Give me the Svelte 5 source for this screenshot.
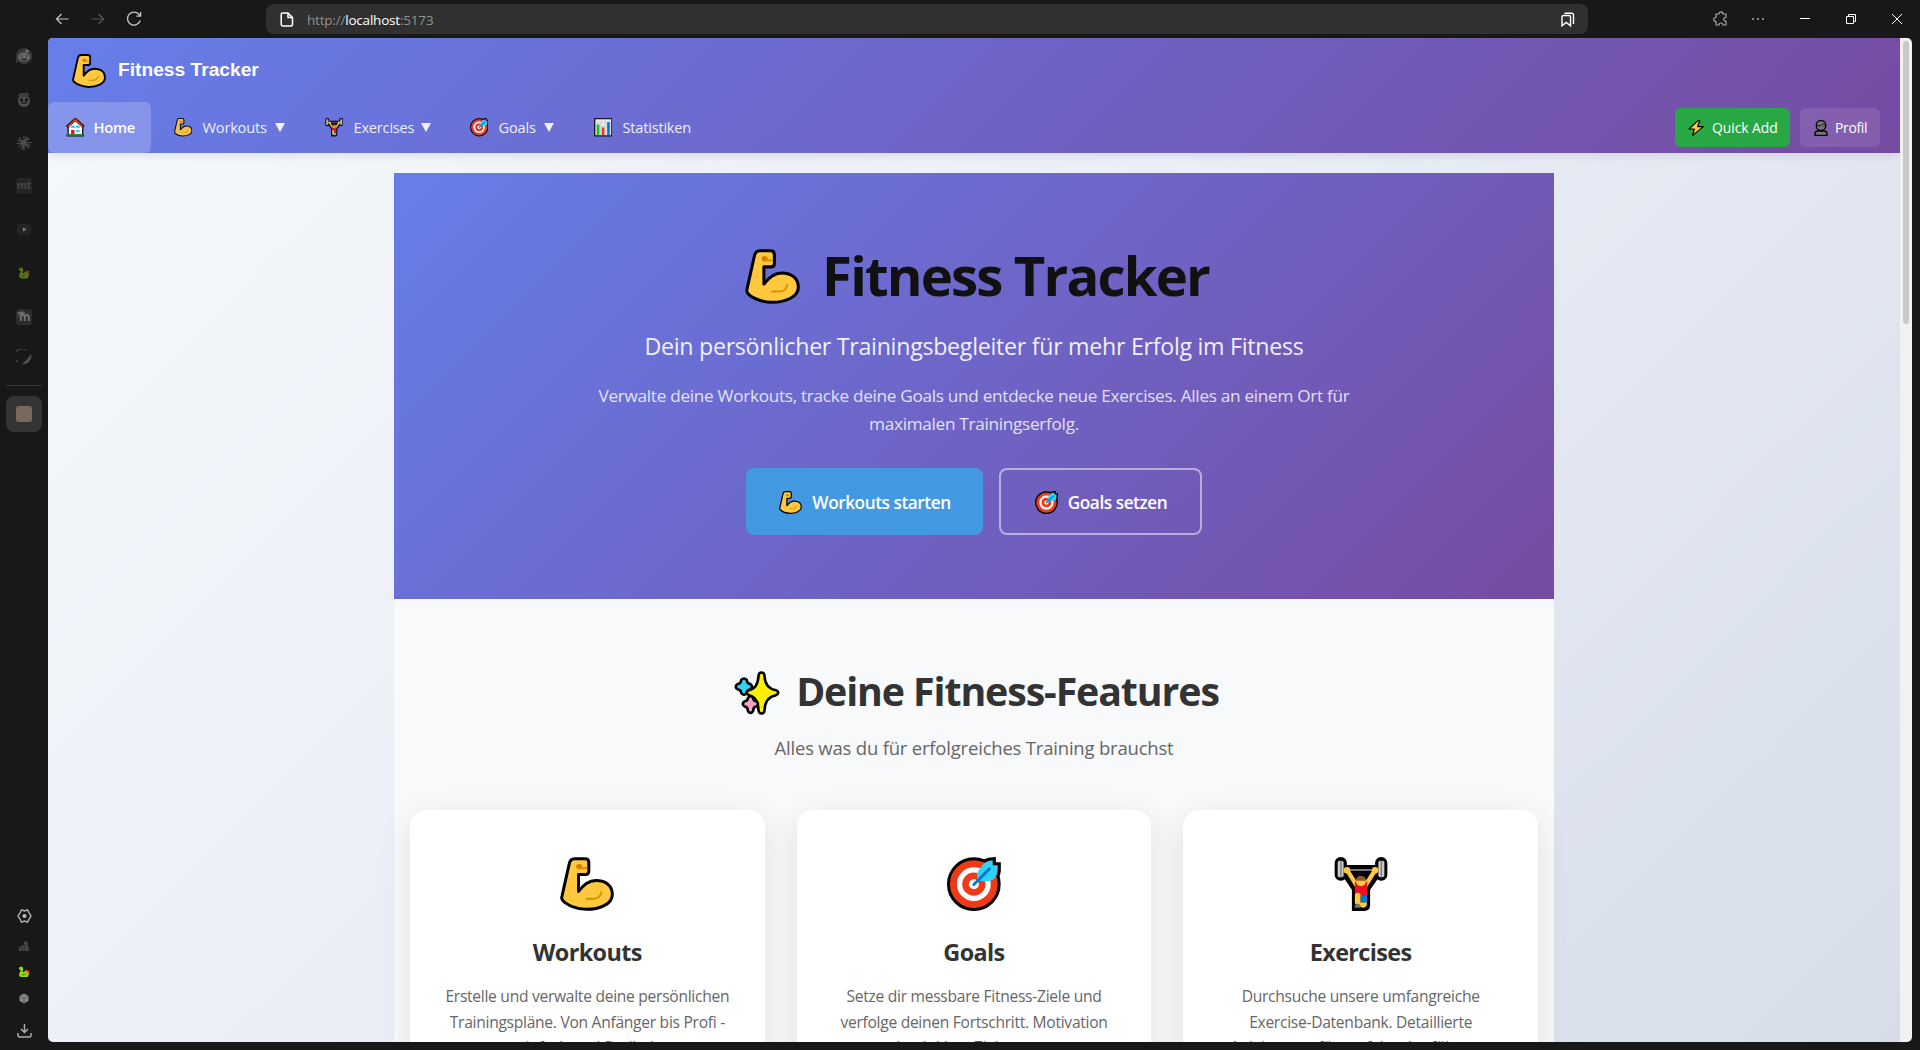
<script>
  const nav = [
    { id: 'home', label: 'Home', icon: 'house', active: true },
    { id: 'workouts', label: 'Workouts', icon: 'arm', menu: true },
    { id: 'exercises', label: 'Exercises', icon: 'lifter', menu: true },
    { id: 'goals', label: 'Goals', icon: 'target', menu: true },
    { id: 'stats', label: 'Statistiken', icon: 'chart' }
  ];
  const cards = [
    { title: 'Workouts', icon: 'arm', lines: ['Erstelle und verwalte deine persönlichen', 'Trainingspläne. Von Anfänger bis Profi -', 'einfach und flexibel.'] },
    { title: 'Goals', icon: 'target', lines: ['Setze dir messbare Fitness-Ziele und', 'verfolge deinen Fortschritt. Motivation', 'durch klare Zielsetzung.'] },
    { title: 'Exercises', icon: 'lifter', lines: ['Durchsuche unsere umfangreiche', 'Exercise-Datenbank. Detaillierte', 'Anleitungen für perfekte Ausführung.'] }
  ];
</script>

{#snippet emoji(name)}
  {#if name === 'arm'}
    <svg class="emoji" viewBox="0 0 163 163">
      <path d="M44 5H76Q87 5 87 16V43Q87 53 77 53H56V104Q80 71 108 71C140 71 158 88 158 113C158 143 118 158 80 158C50 158 20 145 8 131Q4 126 6 118L28 20Q31 5 44 5Z" fill="#ffc83d" stroke="#000" stroke-width="9" stroke-linejoin="round" />
      <ellipse cx="58" cy="29" rx="9" ry="8" fill="#d67f00" />
      <path d="M58 34H82M78 126H102Q122 126 126 104" fill="none" stroke="#d68f00" stroke-width="5.5" />
    </svg>
  {:else if name === 'target'}
    <svg class="emoji" viewBox="0 0 163 163">
      <path d="M106 25Q116 11 138 10V25H153V40Q152 58 140 68" fill="#000" stroke="#000" stroke-width="19" />
      <circle cx="81" cy="82" r="76.5" fill="#f03a17" stroke="#000" stroke-width="9" />
      <circle cx="81" cy="82" r="43" fill="none" stroke="#fff" stroke-width="16" />
      <circle cx="81" cy="82" r="15" fill="#fff" />
      <path d="M91 72V48L106 25Q116 11 138 10V25H153V40Q152 58 140 68Q132 73 118 73Z" fill="#31d2f7" />
      <path d="M81 83L128 36" stroke="#0078d7" stroke-width="9" stroke-linecap="round" />
    </svg>
  {:else if name === 'lifter'}
    <svg class="emoji" viewBox="-2 0 163 163">
      <path d="M20 24H140V52L107 99V145Q107 163 89 163H52V99L20 52Z" fill="#000" />
      <rect x="0" width="37" height="72" rx="18" fill="#000" /><rect x="122" width="37" height="72" rx="18" fill="#000" />
      <rect x="9" y="11" width="18" height="50" rx="6" fill="#ccc" /><rect x="132" y="11" width="18" height="50" rx="6" fill="#ccc" />
      <path d="M19 12V61M141 12V61" stroke="#767676" stroke-width="4" />
      <path d="M30 39H130" stroke="#767676" stroke-width="6" />
      <path d="M38 40L66 86M122 40L93 86" stroke="#ffc83d" stroke-width="13" stroke-linecap="round" />
      <circle cx="37" cy="40" r="10" fill="#ffc83d" /><circle cx="122" cy="40" r="10" fill="#ffc83d" />
      <path d="M61 74H98V118H61Z" fill="#e81224" />
      <circle cx="79.500" cy="73" r="15" fill="#ffc83d" /><path d="M65 72Q65 57 79.500 57T94 72Z" fill="#8e562e" />
      <path d="M78 117H98V138H78Z" fill="#0078d7" />
      <path d="M61 118Q61 108 70 108T78 118V137H98Q98 153 84 153L61 140Z" fill="#ffc83d" />
      <path d="M60 153Q61 141 70 141T79 153Z" fill="#767676" />
    </svg>
  {:else if name === 'sparkles'}
    <svg class="emoji sparkles" viewBox="0 0 46 44">
      <g stroke="#000" stroke-width="2.600" stroke-linejoin="round">
        <path d="M7.200 9Q10 6 12.800 9Q13 12.700 16 12.900Q20 15.700 16 18.500Q13 18.700 12.800 22Q10 25.500 7.200 22Q7 18.700 4 18.500Q-.6 15.700 4 12.900Q7 12.700 7.200 9Z" fill="#31d2f7" />
        <path d="M27.500 1.500Q30.300 1.500 30.500 5Q31.200 17.500 42 19.200Q46.500 21.700 42 24.200Q31.200 26 30.500 39Q30.300 42.500 27.500 42.500T24.500 39Q23.800 26 15 24.200Q10 21.700 15 19.200Q23.800 17.500 24.500 5Q24.700 1.500 27.500 1.500Z" fill="#fff100" />
        <path d="M13.900 27Q16.500 23.500 19.100 27Q19.300 30 22 30.200Q26 32.900 22 35.600Q19.300 35.800 19.100 40Q16.500 44 13.900 40Q13.700 35.800 11 35.600Q6.500 32.900 11 30.200Q13.700 30 13.900 27Z" fill="#f9a1c8" />
      </g>
    </svg>
  {:else if name === 'house'}
    <svg class="emoji" viewBox="0 0 55 56">
      <path d="M6 23V52H50V23L28 4Z" fill="#fff" stroke="#111" stroke-width="4" />
      <path d="M2 27L28 4L53 27" fill="none" stroke="#111" stroke-width="9" />
      <path d="M5 26L28 5L50 26" fill="none" stroke="#f03a17" stroke-width="5" />
      <path d="M15 23H26V30H15ZM30 23H41V30H30ZM30 36H41V43H30Z" fill="#31d2f7" />
      <path d="M15 36H25V51H15Z" fill="#e81224" /><path d="M1 53H54" stroke="#111" stroke-width="6" /><path d="M3 51.500H52" stroke="#16a80c" stroke-width="4" />
    </svg>
  {:else if name === 'chart'}
    <svg class="emoji" viewBox="0 0 55 55">
      <path d="M2 2H53V53H2Z" fill="#f2f2f2" stroke="#111" stroke-width="4" />
      <path d="M5 14H50M5 26H50M5 38H50M20 5V50M34 5V50" stroke="#ccc" stroke-width="1.500" />
      <path d="M12 19V51" stroke="#16c60c" stroke-width="8" /><path d="M27 28V51" stroke="#f03a17" stroke-width="8" /><path d="M43 12V51" stroke="#0078d7" stroke-width="8" />
    </svg>
  {:else if name === 'bolt'}
    <svg class="emoji" viewBox="0 0 48 48">
      <path d="M30 2L3 27H19L14 46L46 20H29L35 2Z" fill="#ffc83d" stroke="#000" stroke-width="3.500" stroke-linejoin="round" />
    </svg>
  {:else if name === 'person'}
    <svg class="emoji" viewBox="0 0 48 48">
      <path d="M6 46V42Q6 33 15 33H33Q42 33 42 42V46Z" fill="#767676" stroke="#000" stroke-width="4" />
      <rect x="10" y="2" width="28" height="29" rx="13" fill="#767676" stroke="#000" stroke-width="4" />
      <path d="M12 17Q25 19 32 11Q34 17 37 18M19 20H21M29 20H31" fill="none" stroke="#222" stroke-width="3" />
    </svg>
  {/if}
{/snippet}

<div class="browser">
  <header class="chrome">
    <div class="history">
      <svg width="14" height="14" viewBox="0 0 14 14"><path d="M13.500 7H1.500M6.500 2L1.500 7L6.500 12" stroke="#c4c4c4" stroke-width="1.200" /></svg>
      <svg class="dim" width="14" height="14" viewBox="0 0 14 14"><path d="M0.500 7H12.500M7.500 2L12.500 7L7.500 12" stroke="#c4c4c4" stroke-width="1.200" /></svg>
      <svg width="16" height="16" viewBox="0 0 16 16"><path d="M14.200 9.500A6.500 6.500 0 1 1 12.800 3.200L14.500 5M14.600 1V5.200H10.300" stroke="#c4c4c4" stroke-width="1.300" /></svg>
    </div>
    <div class="address">
      <svg width="14" height="15" viewBox="0 0 14 15"><path d="M2.500 1H8L12.500 5.500V12.500Q12.500 14 11 14H3Q1.200 14 1.200 12.500V2.500Q1.200 1 2.500 1ZM8 1V5.500H12.500" stroke="#fff" stroke-width="1.500" /></svg>
      <span class="url">http://<b>localhost</b>:5173</span>
      <svg class="mark" width="14" height="15" viewBox="0 0 14 15"><path d="M1 5Q1 3.500 2.500 3.500H8Q9.500 3.500 9.500 5V13.800L5.200 10.500L1 13.800ZM3.500 1.200H11Q12.500 1.200 12.500 3V12" stroke="#fff" stroke-width="1.400" /></svg>
    </div>
    <div class="controls">
      <svg width="16" height="16" viewBox="0 0 16 16"><path d="M4 3H6Q6 .8 8 .8T10 3H13V6.500Q10.700 6.300 10.700 8.200T13 10V14H10Q10 12 8 12T6 14H3V10.500Q.8 10.500 .8 8.500T3 6.500V3Z" stroke="#aaa" stroke-width="1.200" stroke-linejoin="round" /></svg>
      <svg width="14" height="4" viewBox="0 0 14 4"><path d="M1 2h2M6 2h2M11 2h2" stroke="#aaa" stroke-width="1.600" /></svg>
      <svg width="10" height="10" viewBox="0 0 10 10"><path d="M0 4.500H10" stroke="#fff" /></svg>
      <svg width="10" height="10" viewBox="0 0 10 10"><path d="M.5 2.500H7.500V9.500H.5ZM2.500 2V.5H9.500V7.500H8" stroke="#fff" /></svg>
      <svg width="10" height="10" viewBox="0 0 10 10"><path d="M0 0L10 10M10 0L0 10" stroke="#fff" /></svg>
    </div>
  </header>

  <aside class="rail">
    <div class="pinned">
      <span><svg width="16" height="16" viewBox="0 0 16 16"><path d="M8 0A8 8 0 1 1 2 13L0 16V8A8 8 0 0 1 8 0Z" fill="#383838" /><ellipse cx="8" cy="9" rx="6" ry="4.500" fill="#666" /><circle cx="11" cy="3" r="1.500" fill="#777" /><path d="M5.500 7.500v1M10.500 7.500v1M5.500 10.500Q8 13 10.500 10.500" stroke="#222" stroke-width="1.500" /></svg></span>
      <span><svg width="16" height="16" viewBox="0 0 16 16"><circle cx="8" cy="10" r="6" fill="#505050" /><path d="M2 6Q2 1 8 2Q14 0 13 5L10 6Z" fill="#3c3c3c" /><circle cx="5.500" cy="9" r="1.800" fill="#191919" /><circle cx="10.500" cy="9" r="1.800" fill="#191919" /><path d="M5 12H11" stroke="#202020" stroke-width="1.500" /></svg></span>
      <span><svg width="16" height="16" viewBox="0 0 16 16"><path d="M8 .5V15.500M.5 8.500L15.500 7.500M3 2.500L13 13.500M13.500 3L2.500 12M5.500 14.500L11 1.500M1.500 5L14.500 11" stroke="#505050" stroke-width="1.200" /></svg></span>
      <span><i class="mt">mt</i></span>
      <span><svg width="14" height="11" viewBox="0 0 14 11"><rect width="14" height="11" rx="3" fill="#242424" /><path d="M6 3.500L9.500 5.500L6 7.500Z" fill="#858585" /></svg></span>
      <span class="faded"><svg width="12" height="12" viewBox="0 0 12 12"><path d="M1 1.500L4 .5Q6 2 4.500 5.500Q5.500 7 7 5Q11 4 11 8L9.500 11.500H3Q0 10 1.500 7L3 4L1 3.500Z" fill="#88c020" /><path d="M7 3.500L11.500 4L11 7.500L8.500 5.500Z" fill="#e84a12" /><path d="M4 8.500Q7 10 8 7.500" stroke="#3c6a10" /></svg></span>
      <span><svg width="16" height="16" viewBox="0 0 16 16"><rect width="16" height="16" rx="3" fill="#2c2c2c" /><path d="M4.800 12V8Q4.800 6 6.800 6T8.800 8V12M8.800 8Q8.800 6 10.800 6T12.800 8V12" stroke="#707070" stroke-width="1.900" /><path d="M1.500 4L6 2.500L9 4L5 6ZM2.200 4V8.500" fill="#707070" stroke="#707070" stroke-width=".6" /></svg></span>
      <span class="last"><svg width="16" height="16" viewBox="0 0 16 16"><path d="M1.500 13A7 7 0 0 1 10 1.200" stroke="#3d3d3d" stroke-width="1.600" /><path d="M15 5A8 8 0 0 1 6 15.200Q12 10 15 5Z" fill="#505050" /></svg></span>
    </div>
    <div class="rule"></div>
    <div class="tab"><i></i></div>
    <div class="tools">
      <span class="gear"><svg width="15" height="14" viewBox="0 0 15 14"><path d="M4.500 .8L7.500 2L10.500 .8L12 3.800L14 7L12 10.200L10.500 13.200L7.500 12L4.500 13.200L3 10.200L1 7L3 3.800Z" stroke="#a8a8a8" stroke-width="1.500" stroke-linejoin="round" /><circle cx="7.500" cy="7" r="2.100" fill="#bbb" /></svg></span>
      <span><svg width="12" height="12" viewBox="0 0 12 12"><path d="M1 11V8L4 5L6 6V2L9 1L10 6L11 11Z" fill="#484848" /><path d="M4 6V11M7 4V11" stroke="#292929" /></svg></span>
      <span><svg width="12" height="12" viewBox="0 0 12 12"><path d="M1 1.500L4 .5Q6 2 4.500 5.500Q5.500 7 7 5Q11 4 11 8L9.500 11H3Q0 10 1.500 7L3 4L1 3.500Z" fill="#95dc18" /><path d="M6.500 3.500L11.500 5L11 8L8.500 6Z" fill="#f05010" /><path d="M4 8.500Q7 10 8 7.500" stroke="#3c7a10" /></svg></span>
      <span><svg width="10" height="11" viewBox="0 0 10 11"><path d="M5 .5L9.500 3V8L5 10.500L.5 8V3Z" fill="#858585" /><path d="M.5 3L5 5.500L9.500 3M5 5.500V10.500" stroke="#555" stroke-width=".8" /></svg></span>
      <span class="save"><svg width="15" height="14" viewBox="0 0 15 14"><path d="M7.500 0V8M4 5L7.500 8.500L11 5M1 9V11.500Q1 13 2.500 13H12.500Q14 13 14 11.500V9" stroke="#aaa" stroke-width="1.500" stroke-linejoin="round" /></svg></span>
    </div>
  </aside>

  <div class="page">
    <div class="view">
      <header class="site">
        <div class="brand">{@render emoji('arm')}<span>Fitness Tracker</span></div>
        <div class="bar">
          <nav>
            {#each nav as item}
              <a class="item {item.id}" class:active={item.active}>
                {@render emoji(item.icon)}<span>{item.label}</span>
                {#if item.menu}<svg class="caret" viewBox="0 0 10 9"><path d="M0 0H10L5 9Z" fill="currentColor" /></svg>{/if}
              </a>
            {/each}
          </nav>
          <div class="actions">
            <button class="quick">{@render emoji('bolt')}<span>Quick Add</span></button>
            <button class="profile">{@render emoji('person')}<span>Profil</span></button>
          </div>
        </div>
      </header>

      <main>
        <section class="hero">
          <h1>{@render emoji('arm')}<span>Fitness Tracker</span></h1>
          <p class="lead"><span>Dein persönlicher Trainingsbegleiter für mehr Erfolg im Fitness</span></p>
          <p class="text"><span>Verwalte deine Workouts, tracke deine Goals und entdecke neue Exercises. Alles an einem Ort für</span><br /><span>maximalen Trainingserfolg.</span></p>
          <div class="cta">
            <button class="primary">{@render emoji('arm')}<span>Workouts starten</span></button>
            <button class="outline">{@render emoji('target')}<span>Goals setzen</span></button>
          </div>
        </section>

        <section class="features">
          <h2>{@render emoji('sparkles')}<span>Deine Fitness-Features</span></h2>
          <p class="sub">Alles was du für erfolgreiches Training brauchst</p>
          <div class="cards">
            {#each cards as card}
              <article>
                {@render emoji(card.icon)}
                <h3>{card.title}</h3>
                <p>{#each card.lines as line}<span>{line}</span>{/each}</p>
              </article>
            {/each}
          </div>
        </section>
      </main>
    </div>
    <div class="scroll"><i></i></div>
  </div>
</div>

<style>
  :global(body) { margin: 0; overflow: hidden; background: #181818; }
  * { box-sizing: border-box; }
  h1, h2, h3, p { margin: 0; }
  svg { display: block; flex: none; fill: none; }
  button { border: 0; font: inherit; color: inherit; padding: 0; letter-spacing: inherit; }
  span { white-space: nowrap; }

  .browser { width: 1920px; height: 1050px; display: grid; grid-template: 38px 1004px 8px / 48px 1864px 8px; background: #181818; font-family: 'Open Sans', 'Noto Sans', sans-serif; }

  .chrome { grid-column: 1 / 4; display: flex; align-items: flex-start; }
  .history { width: 266px; padding: 12px 0 0 55px; display: flex; gap: 22px; }
  .history svg:last-child { margin: -1px 0 0 -1px; }
  .dim { opacity: .35; }
  .address { width: 1322px; height: 30px; margin-top: 4px; padding: 0 13px 0 14px; border-radius: 8px; background: #303030; display: flex; align-items: center; }
  .url { margin: 1px 0 0 13px; color: #919191; font-size: 13.500px; letter-spacing: -.2px; }
  .url b { color: #fff; font-weight: 400; }
  .mark { margin-left: auto; }
  .controls { display: flex; align-items: center; height: 38px; padding-left: 125px; }
  .controls svg:nth-child(2) { margin-left: 22px; }
  .controls svg:nth-child(3) { margin-left: 35px; }
  .controls svg:nth-child(4) { margin-left: 36px; }
  .controls svg:nth-child(5) { margin-left: 36px; }

  .rail { grid-row: 2 / 4; grid-column: 1; display: flex; flex-direction: column; align-items: center; }
  .pinned { display: flex; flex-direction: column; margin-top: -4px; }
  .pinned span { width: 48px; height: 43.500px; display: grid; place-items: center; }
  .pinned .last { height: 36px; }
  .faded { opacity: .55; }
  .mt { width: 16px; height: 16px; border-radius: 3px; background: #252525; color: #484848; font: 700 10px/15px 'Open Sans', sans-serif; text-align: center; }
  .rule { width: 36px; height: 1px; margin-top: 10px; background: #363636; }
  .tab { width: 36px; height: 36px; margin-top: 10px; border-radius: 8px; background: #343434; display: grid; place-items: center; }
  .tab i { width: 16px; height: 16px; border-radius: 3px; background: #7b685d; }
  .tools { margin-top: auto; padding-bottom: 5px; display: flex; flex-direction: column; }
  .tools span { width: 48px; height: 26.500px; display: grid; place-items: center; }
  .tools .gear { height: 33px; }
  .tools .save { height: 33px; padding-top: 5px; }

  .page { grid-area: 2 / 2; display: flex; overflow: hidden; border-radius: 5px; }
  .view { width: 1852px; height: 1004px; overflow: hidden; background: linear-gradient(135deg, #f6f9fb, #e9edf6 48%, #d6dde9); }
  .scroll { width: 12px; padding: 3px; background: #f1f1f1; }
  .scroll i { display: block; width: 6px; height: 283px; border-radius: 3px; background: #c9c9c9; }

  .site { height: 115px; position: relative; background: linear-gradient(135deg, #667eea, #764ba2); box-shadow: 0 2px 10px rgba(0, 0, 0, .1); color: #fff; }
  .brand { height: 64px; display: flex; align-items: center; padding: 2px 0 0 24px; gap: 12px; font: 700 19.200px/30px 'Liberation Sans', Arial, sans-serif; }
  .brand .emoji { width: 34px; height: 34px; }
  .brand span { margin-top: -2px; }
  .bar, nav, .actions { display: flex; }
  .bar { justify-content: space-between; height: 51px; }
  nav { gap: 4px; color: rgba(255, 255, 255, .9); font-size: 14.700px; letter-spacing: -.25px; }
  .item { display: flex; align-items: center; padding-left: 18.500px; border-radius: 6px; }
  .item span { margin: -1px 0 0 10.500px; }
  .item .emoji { width: 18.500px; height: 18.500px; opacity: .92; }
  .item.active { padding-left: 18px; background: rgba(255, 255, 255, .2); color: #fff; font-weight: 600; }
  .item.active span { margin-left: 9px; }
  .active .emoji { opacity: 1; }
  .caret { width: 10px; height: 9px; margin-left: 8px; }
  .home { width: 103px; }
  .workouts { width: 147px; }
  .exercises { width: 141px; }
  .exercises .caret { margin-left: 7px; }
  .goals { width: 120px; }
  .actions { gap: 10px; padding: 6px 20px 0 0; font-size: 13.900px; letter-spacing: -.05px; }
  .actions button { height: 39px; border-radius: 6px; display: flex; align-items: center; gap: 8px; padding-left: 13px; }
  .actions .emoji { width: 16px; height: 16px; }
  .quick { width: 115px; background: #28a745; }
  .profile { width: 80px; background: rgba(255, 255, 255, .1); }
  .actions .profile { gap: 6px; letter-spacing: -.3px; }

  main { width: 1160px; margin: 20px auto 0; }
  .hero { height: 426px; padding-top: 61px; background: linear-gradient(135deg, #667eea, #764ba2); color: #fff; text-align: center; }
  h1 { display: flex; justify-content: center; align-items: center; gap: 22px; height: 84px; padding-left: 6px; color: #111; font-size: 54.500px; line-height: 84px; font-weight: 700; letter-spacing: -1.850px; }
  h1 span { margin-top: -2px; }
  h1 .emoji { width: 55px; height: 55px; }
  .lead { margin-top: 9px; height: 40px; font-size: 23.200px; line-height: 38px; letter-spacing: -.28px; opacity: .9; }
  .text { margin-top: 15px; height: 56px; font-size: 17.200px; line-height: 28px; letter-spacing: -.3px; opacity: .8; }
  .cta { display: flex; justify-content: center; gap: 16px; margin-top: 30px; font-size: 17.200px; font-weight: 600; letter-spacing: -.43px; }
  .cta button { height: 67px; padding: 2px 0 0 1px; border-radius: 8px; display: flex; align-items: center; justify-content: center; gap: 10px; }
  .cta .emoji { width: 23px; height: 23px; }
  .primary { width: 237px; background: #4299e1; }
  .cta .outline { width: 203px; background: transparent; border: 2px solid rgba(255, 255, 255, .5); }

  .features { height: 1000px; padding: 64px 16px 0; background: #f8f9fb; text-align: center; }
  h2 { height: 60px; display: flex; justify-content: center; align-items: center; gap: 16px; padding-left: 5px; color: #333; font-size: 39.300px; line-height: 60px; font-weight: 700; letter-spacing: -1.100px; }
  h2 span { margin-top: -4px; }
  .sparkles { width: 46px; height: 44px; }
  .sub { height: 30px; margin-top: 10px; font-size: 18.500px; line-height: 30px; letter-spacing: -.2px; color: #666; }
  .cards { display: grid; grid-template-columns: repeat(3, 1fr); gap: 32px; margin-top: 47px; }
  article { height: 420px; padding-top: 47px; border-radius: 16px; background: #fff; box-shadow: 0 8px 32px rgba(0, 0, 0, .1); }
  article .emoji { width: 54px; height: 54px; margin: 0 auto; }
  h3 { margin-top: 23px; font-size: 23.400px; line-height: 36px; letter-spacing: -.6px; color: #333; }
  article p { margin-top: 14px; color: #666; font-size: 15.600px; line-height: 25.600px; letter-spacing: -.28px; }
  article p span { display: block; }
</style>
